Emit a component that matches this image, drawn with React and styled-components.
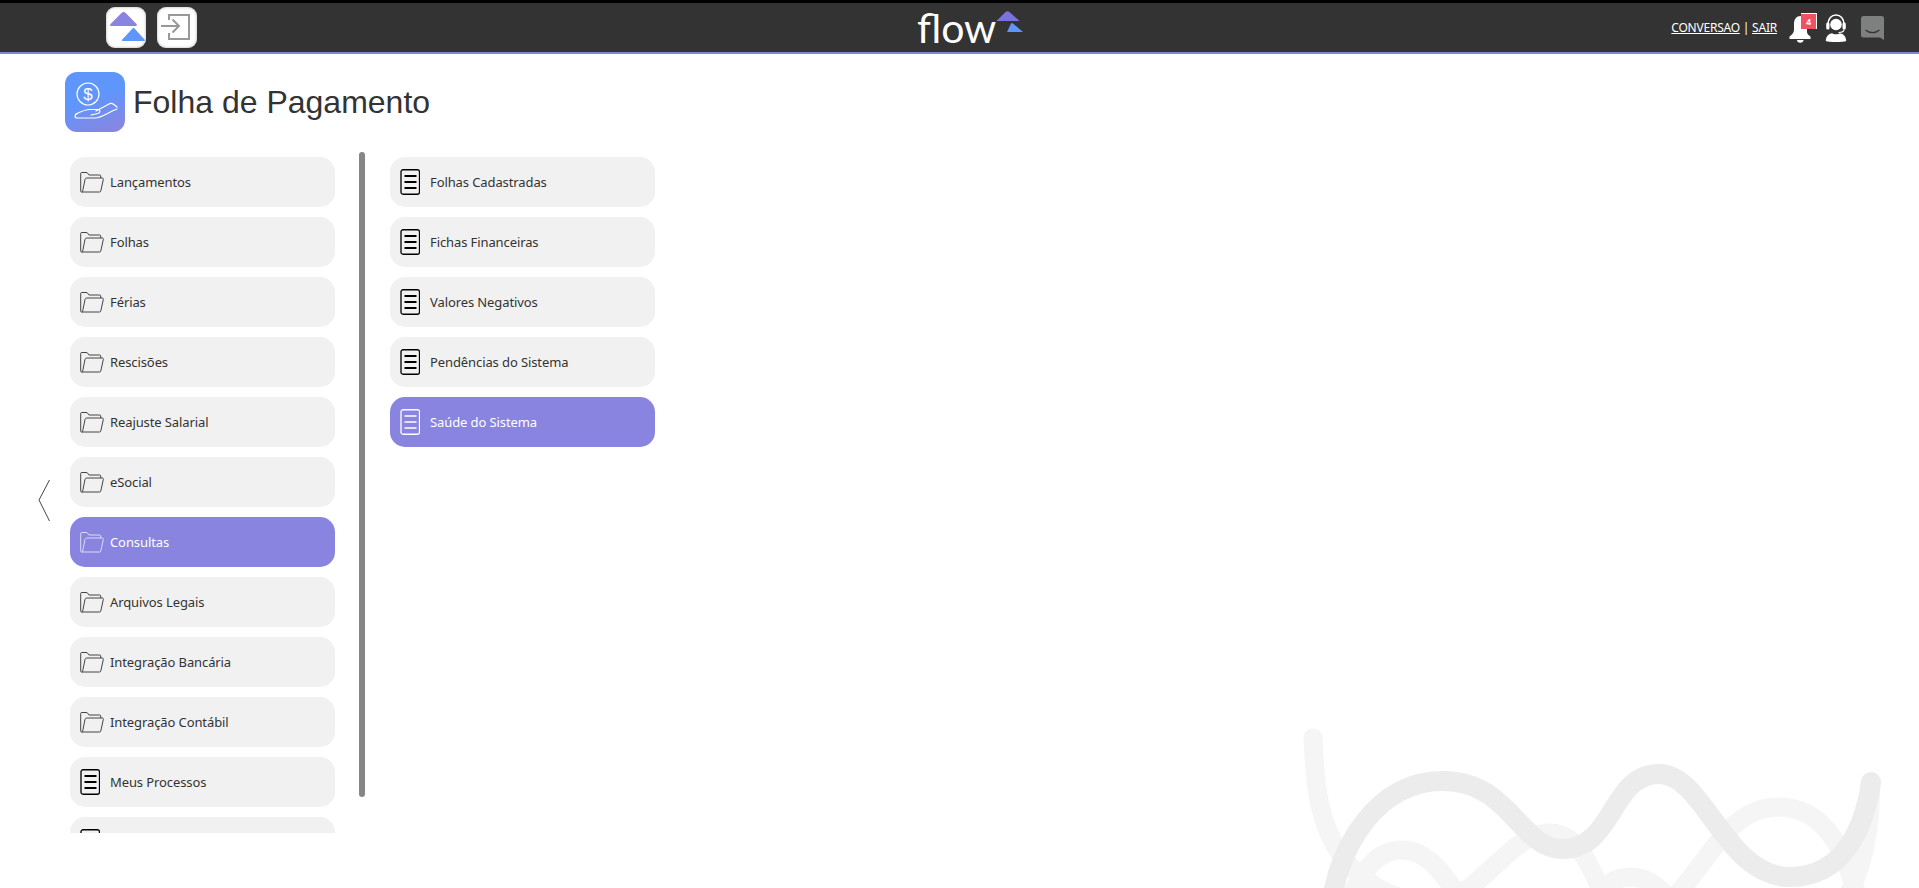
import React from "react";
import styled, { createGlobalStyle } from "styled-components";

const Global = createGlobalStyle`
  html, body { margin: 0; padding: 0; background: #fff; }
  body { height: 888px; overflow: hidden; font-family: "Noto Sans", Tahoma, sans-serif; }
  * { box-sizing: border-box; }
`;
const Page = styled.div`position: relative; width: 1919px; height: 888px; overflow: hidden; background: #fff;`;
const Header = styled.header`
  height: 54px; background: #333; border-top: 3px solid #000; border-bottom: 2px solid #7f84e0;
  display: grid; grid-template-columns: 811px auto 1fr; align-items: center; padding: 0 35px 0 106px;
`;
const HeaderLeft = styled.div`display: flex; gap: 11px; margin-top: 4px; align-self: start;`;
const SquareButton = styled.div`
  width: 40px; height: 41px; border-radius: 9px; background: #fff; display: flex;
  box-shadow: inset 0 0 3px #aaa;
`;
const Logo = styled.div`display: flex; align-items: flex-start; height: 49px;`;
const LogoText = styled.span`font-family: Lato, sans-serif; font-weight: 400; font-size: 41px; line-height: 1; color: #fff; margin-top: 4px;`;
const LogoMark = styled.svg`margin: 8px 0 0 0; flex: none;`;
const HeaderRight = styled.div`display: flex; align-items: center; justify-content: flex-end; color: #fff; font-size: 12px;`;
const Links = styled.div`font-family: "Noto Sans", sans-serif; font-size: 12px; margin-right: 12px; letter-spacing: -0.22px; a { color: #fff; text-decoration: underline; }`;
const Bell = styled.div`position: relative; width: 28px; height: 30px; display: flex; align-items: flex-end; margin-right: 8px;`;
const Badge = styled.span`
  position: absolute; top: 0; right: 0; width: 16px; height: 16px; background: #f0525f; color: #fff; font-size: 9px; font-weight: 700;
  display: flex; align-items: center; justify-content: center; border: 1px solid #fff; border-bottom: none; border-left: none;
`;
const HeadsetSlot = styled.div`display: flex; margin-right: 14px;`;

const TitleRow = styled.div`display: flex; align-items: center; gap: 8px; padding: 18px 0 0 65px; height: 78px;`;
const PageIcon = styled.div`width: 60px; height: 60px; border-radius: 12px; background: linear-gradient(160deg, #5f96fb 45%, #8f82dd 100%); display: flex;`;
const Title = styled.h1`margin: 0; font-family: "Liberation Sans", Arial, sans-serif; font-weight: 400; font-size: 32px; color: #333;`;

const Body = styled.div`display: flex; padding: 20px 0 0 26px; position: relative;`;
const Chevron = styled.svg`width: 14px; height: 44px; margin: 327px 0 0 12px; flex: none;`;
const ListClip = styled.div`width: 265px; height: 676px; margin-left: 18px; margin-top: 5px; overflow: hidden; display: flex; flex-direction: column; gap: 10px; flex: none;`;
const Scroll = styled.div`width: 6px; height: 645px; background: #868686; border-radius: 3px; margin-left: 24px; flex: none;`;
const SubList = styled.div`width: 265px; margin-left: 25px; margin-top: 5px; display: flex; flex-direction: column; gap: 10px; flex: none;`;
const Item = styled.div`
  flex: none; height: 50px; border-radius: 15px; display: flex; align-items: center; padding-left: 10px;
  background: ${p => (p.$active ? "#8884e0" : "#f1f1f1")};
  color: ${p => (p.$active ? "#fff" : "#333")};
  font-size: 13px; letter-spacing: -0.1px;
`;
const IconSlot = styled.span`width: 30px; flex: none; display: flex; align-items: center;`;
const Waves = styled.svg`position: absolute; right: 0; bottom: 0; pointer-events: none;`;

const Folder = ({ color }) => (
  <svg width="24" height="23" viewBox="0 0 24 23" fill="none" stroke={color} strokeWidth="1">
    <path d="M1.500 21C1 21 .7 20.500 .7 20V2.500C.7 1.800 1 1.500 1.700 1.500H7l2 2.500h10.500c.8 0 1.200.4 1.200 1V7" />
    <path d="M1.500 21c.6 0 1-.4 1.200-1L5 8.500C5.200 7.500 5.700 7 6.500 7H22.200c1 0 1.300.6 1.100 1.500L20.800 20c-.2.700-.6 1-1.200 1z" />
  </svg>
);
const Doc = ({ color }) => (
  <svg width="20" height="26" viewBox="0 0 20 26" fill="none">
    <rect x="1" y="0.750" width="18.500" height="24.500" rx="2" stroke={color} strokeWidth="1.300" />
    <path d="M4.500 7h12M4.500 13h12M4.500 19h12" stroke={color} strokeWidth={color === "#000" ? 2 : 1.300} />
  </svg>
);
const left = ["Lançamentos", "Folhas", "Férias", "Rescisões", "Reajuste Salarial", "eSocial", "Consultas", "Arquivos Legais", "Integração Bancária", "Integração Contábil"];
const right = ["Folhas Cadastradas", "Fichas Financeiras", "Valores Negativos", "Pendências do Sistema", "Saúde do Sistema"];

export default function App() {
  return (
    <Page>
      <Global />
      <Waves width="640" height="178" viewBox="1279 710 640 178" fill="none" strokeLinecap="round">
        <g stroke="#f5f5f5" strokeWidth="19">
          <path d="M1313 738C1315 790 1320 825 1341 855C1360 880 1385 895 1410 900" />
          <path d="M1349 900C1365 865 1380 850 1402 850C1428 850 1445 875 1464 905" />
          <path d="M1450 900C1490 880 1515 833 1549 833C1585 833 1592 880 1610 905" />
          <path d="M1595 895C1605 885 1615 877 1631 877C1650 877 1660 890 1672 900C1710 860 1730 807 1778 807C1825 807 1845 850 1858 900" />
          <path d="M1871 782C1870 830 1865 865 1843 905" />
        </g>
        <path d="M1331 905C1338 850 1375 781 1443 781C1510 781 1520 849 1562 849C1615 849 1610 774 1659 774C1705 774 1725 877 1790 877C1845 877 1865 825 1871 782" stroke="#ececec" strokeWidth="20" />
      </Waves>
      <Header>
        <HeaderLeft>
          <SquareButton>
            <svg width="40" height="40" viewBox="0 0 40 40">
              <path d="M15.500 6c1.200-1.300 3-1.300 4.200 0L30.500 17c.9 1 .4 2-.8 2H5.300C4.100 19 3.600 18 4.500 17z" fill="#8884e0" />
              <path d="M26 22c.8-1.200 2.200-1.200 3 0l9.500 10.500c.7.800.3 1.500-.7 1.500H17c-1 0-1.400-.7-.7-1.500z" fill="#5f96fb" />
            </svg>
          </SquareButton>
          <SquareButton>
            <svg width="40" height="40" viewBox="0 0 40 40" fill="none" stroke="#999" strokeWidth="2">
              <path d="M12 13V8h20v24H12v-6" />
              <path d="M4 19h18M15.500 12.500l6.500 6.500-6.500 6.500" />
            </svg>
          </SquareButton>
        </HeaderLeft>
        <Logo>
          <LogoText>flow</LogoText>
          <LogoMark width="27" height="21" viewBox="0 0 27 21">
            <path d="M9.500 1c1-1 3-1 4 0L23.500 10H.5z" fill="#7a72e0" />
            <path d="M15 12.500c.6-.5 1.400-.5 2 0L27 21H11z" fill="#5f96fb" />
          </LogoMark>
        </Logo>
        <HeaderRight>
          <Links><a>CONVERSAO</a> | <a>SAIR</a></Links>
          <Bell>
            <svg width="22" height="28" viewBox="0 0 22 28" fill="#fff">
              <path d="M11.500 1c4 0 6.500 3 6.500 8v8c0 2 1.500 3 3.500 4.500V24H.5v-2.500C2.700 20 5 18 5 15V9c0-5 2.500-8 6.500-8z" />
              <path d="M8 25h6.500c0 1.700-1.400 2.800-3.200 2.800S8 26.700 8 25z" />
            </svg>
            <Badge>4</Badge>
          </Bell>
          <HeadsetSlot>
            <svg width="22" height="28" viewBox="0 0 22 28" fill="#fff">
              <circle cx="11" cy="10.500" r="5.800" />
              <path d="M3 10.500C3 4.500 6.500 1 11 1s8 3.500 8 9.500" fill="none" stroke="#fff" strokeWidth="1.600" />
              <rect x="1.200" y="8.500" width="3.300" height="7" rx="1.500" />
              <rect x="17.500" y="8.500" width="3.300" height="7" rx="1.500" />
              <path d="M19 15.500c0 2-2 3-5.500 3" fill="none" stroke="#fff" strokeWidth="1.200" />
              <path d="M.8 27c0-4.500 2.700-7.200 6.400-7.800 1.800 1.300 5.800 1.300 7.600 0 3.700.6 6.400 3.300 6.400 7.800-3 1.300-17.400 1.300-20.400 0z" />
            </svg>
          </HeadsetSlot>
          <svg width="23" height="24" viewBox="0 0 23 24">
            <path d="M2.500 0h18A2.500 2.500 0 0 1 23 2.500V24l-4-2.500H2.500A2.500 2.500 0 0 1 0 19V2.500A2.500 2.500 0 0 1 2.500 0z" fill="#7d807e" />
            <path d="M4.500 14c4 3.500 10 3.500 14 0" fill="none" stroke="#333" strokeWidth="1.200" />
          </svg>
        </HeaderRight>
      </Header>
      <TitleRow>
        <PageIcon>
          <svg width="60" height="60" viewBox="0 0 60 60" fill="none" stroke="#fff" strokeWidth="1.200" strokeLinecap="round" strokeLinejoin="round">
            <circle cx="23" cy="22" r="11" />
            <text x="23" y="28" fontSize="17" fontFamily="Liberation Sans" fill="#fff" stroke="none" textAnchor="middle">$</text>
            <path d="M11 42c5-2.500 9-4.500 14-4.500h8c2.500 0 2.500 3.500 0 4l-7 1.500" />
            <path d="M31 39l14-7.500c2.500-1 5 1.500 7 3.500" />
            <path d="M12 46c-2.500 0-2.500-4 0-4M12 46h18c6 0 14-6 22-9" />
          </svg>
        </PageIcon>
        <Title>Folha de Pagamento</Title>
      </TitleRow>
      <Body>
        <Chevron viewBox="0 0 14 44" fill="none" stroke="#444" strokeWidth="1">
          <path d="M11.500 1L1 21l10.500 21" />
        </Chevron>
        <ListClip>
          {left.map(t => (
            <Item key={t} $active={t === "Consultas"}>
              <IconSlot><Folder color={t === "Consultas" ? "#dcdaf8" : "#444"} /></IconSlot>
              {t}
            </Item>
          ))}
          <Item><IconSlot><Doc color="#000" /></IconSlot>Meus Processos</Item>
          <Item><IconSlot><Doc color="#000" /></IconSlot></Item>
        </ListClip>
        <Scroll />
        <SubList>
          {right.map(t => (
            <Item key={t} $active={t === "Saúde do Sistema"}>
              <IconSlot><Doc color={t === "Saúde do Sistema" ? "#fff" : "#000"} /></IconSlot>
              {t}
            </Item>
          ))}
        </SubList>
      </Body>
    </Page>
  );
}
